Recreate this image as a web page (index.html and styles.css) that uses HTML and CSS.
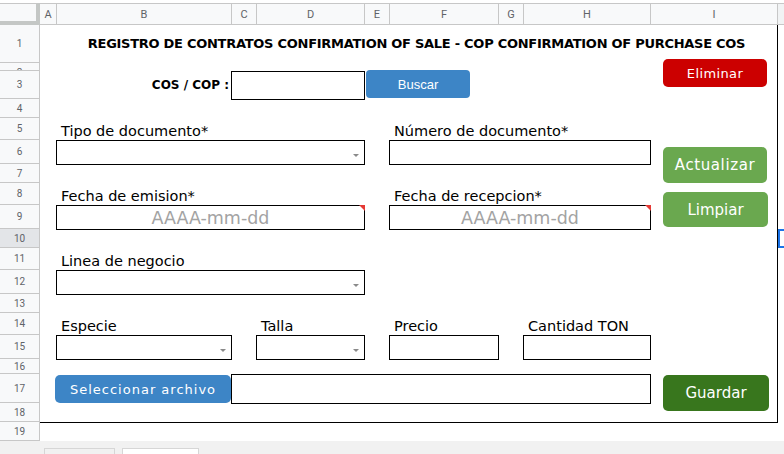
FILE: index.html
```html
<!DOCTYPE html>
<html lang="es">
<head>
<meta charset="utf-8">
<title>Registro de contratos</title>
<link rel="stylesheet" href="styles.css">
</head>
<body>
<div class="sheet">
  <!-- column headers -->
  <div class="corner"></div>
  <div class="ch ch-a">A</div>
  <div class="ch">B</div>
  <div class="ch">C</div>
  <div class="ch">D</div>
  <div class="ch">E</div>
  <div class="ch">F</div>
  <div class="ch">G</div>
  <div class="ch">H</div>
  <div class="ch">I</div>
  <div class="ch ch-sel"></div>

  <!-- row headers -->
  <div class="rh r1">1</div>
  <div class="rh r2 rh-clip">2</div>
  <div class="rh r3">3</div>
  <div class="rh r4">4</div>
  <div class="rh r5">5</div>
  <div class="rh r6">6</div>
  <div class="rh r7">7</div>
  <div class="rh r8">8</div>
  <div class="rh r9">9</div>
  <div class="rh r10 rh-sel">10</div>
  <div class="rh r11">11</div>
  <div class="rh r12">12</div>
  <div class="rh r13">13</div>
  <div class="rh r14">14</div>
  <div class="rh r15">15</div>
  <div class="rh r16">16</div>
  <div class="rh r17">17</div>
  <div class="rh r18">18</div>
  <div class="rh r19">19</div>

  <!-- outer border of the form -->
  <div class="frame"></div>

  <!-- content -->
  <div class="title">REGISTRO DE CONTRATOS CONFIRMATION OF SALE - COP CONFIRMATION OF PURCHASE COS</div>

  <div class="cos-label">COS / COP :</div>
  <div class="box cos-input"></div>
  <div class="btn btn-buscar">Buscar</div>
  <div class="btn btn-eliminar">Eliminar</div>

  <div class="lbl lbl-tipo">Tipo de documento*</div>
  <div class="lbl lbl-numero">Número de documento*</div>
  <div class="box dd box-tipo"></div>
  <div class="box box-numero"></div>
  <div class="btn btn-green btn-actualizar">Actualizar</div>

  <div class="lbl lbl-emision">Fecha de emision*</div>
  <div class="lbl lbl-recepcion">Fecha de recepcion*</div>
  <div class="box date box-emision">AAAA-mm-dd</div>
  <div class="box date box-recepcion">AAAA-mm-dd</div>
  <div class="btn btn-green btn-limpiar">Limpiar</div>

  <div class="lbl lbl-linea">Linea de negocio</div>
  <div class="box dd box-linea"></div>

  <div class="lbl lbl-especie">Especie</div>
  <div class="lbl lbl-talla">Talla</div>
  <div class="lbl lbl-precio">Precio</div>
  <div class="lbl lbl-cantidad">Cantidad TON</div>
  <div class="box dd box-especie"></div>
  <div class="box dd box-talla"></div>
  <div class="box box-precio"></div>
  <div class="box box-cantidad"></div>

  <div class="btn btn-archivo">Seleccionar archivo</div>
  <div class="box box-archivo"></div>
  <div class="btn btn-guardar">Guardar</div>

  <div class="selection"></div>
</div>
<div class="tabs">
  <div class="tab"></div>
  <div class="tab tab-active"></div>
</div>
</body>
</html>
```
FILE: styles.css
```css
html, body {
  margin: 0;
  padding: 0;
  height: 100%;
  overflow: hidden;
  background: #ffffff;
}

body {
  font-family: "DejaVu Sans", "Noto Sans", sans-serif;
  color: #000;
}

.sheet {
  padding-top: 3px;
  display: grid;
  grid-template-columns: 40px 16px 175px 25px 108px 25px 109px 25px 127px 127px 1fr;
  grid-template-rows: 22px 38px 8px 28px 19px 22px 24px 19px 22px 24px 19px 22px 24px 19px 22px 24px 15px 29px 19px 19px;
  height: 441px;
  box-sizing: border-box;
}

/* ---------- headers ---------- */
.corner {
  grid-row: 1;
  grid-column: 1;
  background: #f8f9fa;
  border-top: 1px solid #c7c7c7;
  border-right: 4px solid #c4c7c5;
  border-bottom: 4px solid #c4c7c5;
  box-sizing: border-box;
}

.ch {
  grid-row: 1;
  background: #f8f9fa;
  border-top: 1px solid #c7c7c7;
  border-bottom: 1px solid #c7c7c7;
  border-left: 1px solid #c7c7c7;
  box-sizing: border-box;
  display: flex;
  align-items: center;
  justify-content: center;
  font-family: Roboto, "Liberation Sans", sans-serif;
  font-size: 11px;
  color: #5f6368;
}

.ch-a { border-left: none; }
.ch-sel { background: #f1f3f4; }

.rh {
  grid-column: 1;
  background: #f8f9fa;
  border-right: 1px solid #c7c7c7;
  border-bottom: 1px solid #c7c7c7;
  box-sizing: border-box;
  display: flex;
  align-items: center;
  justify-content: center;
  font-family: Roboto, "Liberation Sans", sans-serif;
  font-size: 10px;
  color: #5f6368;
  overflow: hidden;
}

.rh-clip {
  align-items: flex-start;
  line-height: 19px;
}

.rh-sel { background: #e3e5e8; }

.r1 { grid-row: 2; }
.r2 { grid-row: 3; }
.r3 { grid-row: 4; }
.r4 { grid-row: 5; }
.r5 { grid-row: 6; }
.r6 { grid-row: 7; }
.r7 { grid-row: 8; }
.r8 { grid-row: 9; }
.r9 { grid-row: 10; }
.r10 { grid-row: 11; }
.r11 { grid-row: 12; }
.r12 { grid-row: 13; }
.r13 { grid-row: 14; }
.r14 { grid-row: 15; }
.r15 { grid-row: 16; }
.r16 { grid-row: 17; }
.r17 { grid-row: 18; }
.r18 { grid-row: 19; }
.r19 { grid-row: 20; }

/* ---------- frame ---------- */
.frame {
  grid-row: 2 / 20;
  grid-column: 2 / 11;
  align-self: start;
  justify-self: start;
  width: calc(100% + 1px);
  height: calc(100% + 1px);
  border-right: 1px solid #000;
  border-bottom: 1px solid #000;
  box-sizing: border-box;
}

/* ---------- title ---------- */
.title {
  grid-row: 2;
  grid-column: 3 / 11;
  display: flex;
  align-items: center;
  justify-content: center;
  font-weight: bold;
  font-size: 13px;
  letter-spacing: -0.27px;
  white-space: nowrap;
  color: #000;
  padding-bottom: 1px;
}

/* ---------- labels ---------- */
.lbl {
  align-self: end;
  padding-left: 5px;
  font-size: 14.5px;
  line-height: 18px;
  white-space: nowrap;
  color: #000;
}

.lbl-tipo { grid-row: 6; grid-column: 3 / 6; }
.lbl-numero { grid-row: 6; grid-column: 7 / 10; }
.lbl-emision { grid-row: 9; grid-column: 3 / 6; }
.lbl-recepcion { grid-row: 9; grid-column: 7 / 10; }
.lbl-linea { grid-row: 12; grid-column: 3 / 6; }
.lbl-especie { grid-row: 15; grid-column: 3; }
.lbl-talla { grid-row: 15; grid-column: 5; }
.lbl-precio { grid-row: 15; grid-column: 7; }
.lbl-cantidad { grid-row: 15; grid-column: 9; }

.cos-label {
  grid-row: 4;
  grid-column: 3;
  justify-self: end;
  align-self: center;
  padding-right: 2px;
  font-weight: bold;
  font-size: 12px;
  white-space: nowrap;
}

/* ---------- input boxes ---------- */
.box {
  align-self: start;
  justify-self: start;
  width: calc(100% + 1px);
  height: calc(100% + 1px);
  border: 1px solid #000;
  box-sizing: border-box;
  background: #fff;
}

.dd {
  display: flex;
  justify-content: flex-end;
  align-items: center;
}

.dd::after {
  content: "";
  border-left: 3.5px solid transparent;
  border-right: 3.5px solid transparent;
  border-top: 3.5px solid #8a8a8a;
  margin-right: 5px;
  margin-top: 5px;
}

.date {
  position: relative;
  display: flex;
  align-items: center;
  justify-content: center;
  font-size: 17.5px;
  color: #a3a3a3;
}

.date::after {
  content: "";
  position: absolute;
  top: -1px;
  right: -1px;
  border-top: 6px solid #e53935;
  border-left: 6px solid transparent;
}

.cos-input { grid-row: 4; grid-column: 4 / 6; }
.box-tipo { grid-row: 7; grid-column: 3 / 6; }
.box-numero { grid-row: 7; grid-column: 7 / 10; }
.box-emision { grid-row: 10; grid-column: 3 / 6; }
.box-recepcion { grid-row: 10; grid-column: 7 / 10; }
.box-linea { grid-row: 13; grid-column: 3 / 6; }
.box-especie { grid-row: 16; grid-column: 3; }
.box-talla { grid-row: 16; grid-column: 5; }
.box-precio { grid-row: 16; grid-column: 7; }
.box-cantidad { grid-row: 16; grid-column: 9; }
.box-archivo { grid-row: 18; grid-column: 4 / 10; }

/* ---------- buttons ---------- */
.btn {
  align-self: start;
  justify-self: start;
  display: flex;
  align-items: center;
  justify-content: center;
  color: #fff;
  border-radius: 5px;
  white-space: nowrap;
  box-sizing: border-box;
}

.btn-buscar {
  grid-row: 4;
  grid-column: 6 / 8;
  margin-left: 2px;
  margin-top: -1px;
  width: 104px;
  height: 28px;
  background: #3d85c6;
  font-family: "Liberation Sans", Arial, sans-serif;
  font-size: 13px;
  border-radius: 4px;
}

.btn-eliminar {
  grid-row: 2 / 5;
  grid-column: 10;
  margin-top: 34px;
  margin-left: 13px;
  width: 104px;
  height: 28px;
  background: #cc0000;
  font-size: 13px;
  letter-spacing: 0.4px;
}

.btn-green { background: #6aa84f; font-size: 15px; }

.btn-actualizar {
  grid-row: 7 / 9;
  grid-column: 10;
  margin-top: 7px;
  margin-left: 13px;
  width: 104px;
  height: 36px;
  letter-spacing: 0.6px;
}

.btn-limpiar {
  grid-row: 9 / 11;
  grid-column: 10;
  margin-top: 9px;
  margin-left: 13px;
  width: 105px;
  height: 35px;
}

.btn-guardar {
  grid-row: 18 / 20;
  grid-column: 10;
  margin-top: 1px;
  margin-left: 13px;
  width: 106px;
  height: 36px;
  background: #38761d;
  font-size: 15px;
}

.btn-archivo {
  grid-row: 18;
  grid-column: 3;
  margin-left: -1px;
  margin-top: 1px;
  width: 176px;
  height: 28px;
  background: #3d85c6;
  font-size: 13px;
  letter-spacing: 1px;
}

/* ---------- selection ---------- */
.selection {
  grid-row: 11;
  grid-column: 11;
  margin-left: 1px;
  width: calc(100% - 1px);
  height: 19px;
  border: 2px solid #1a73e8;
  border-right: none;
  box-sizing: border-box;
}

/* ---------- sheet tabs ---------- */
.tabs {
  background: #f1f1f1;
  display: flex;
  gap: 7px;
  padding: 7px 0 0 44px;
  box-sizing: border-box;
  height: 13px;
}

.tab {
  flex: none;
  width: 71px;
  height: 12px;
  border: 1px solid #d6d6d6;
  border-bottom: none;
  box-sizing: border-box;
  background: #f1f1f1;
}

.tab-active {
  width: 77px;
  background: #fff;
}
```
